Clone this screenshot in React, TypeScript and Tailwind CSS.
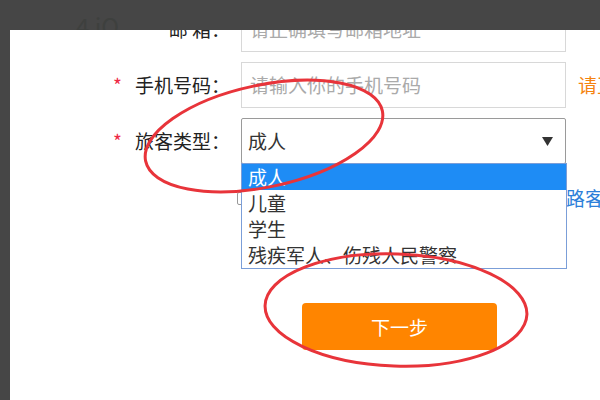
import React from 'react';

const font = "font-['Noto_Sans_CJK_SC','Microsoft_YaHei',sans-serif]";

const options = ['成人', '儿童', '学生', '残疾军人、伤残人民警察'];

function Label({ text, required }: { text: string; required?: boolean }) {
    return (
        <div className="w-[220px] shrink-0 flex items-center justify-end text-[19px] leading-[26px] text-[#222]">
            {required && <span className="text-[#ee2a45] mr-[13px] text-[19px]">*</span>}
            <span className="whitespace-pre">{text}</span>
        </div>
    );
}

export default function App() {
    return (
        <div className={`relative w-[600px] h-[400px] bg-[#464646] flex flex-col overflow-hidden ${font}`}>
            {/* top dark bar, faint watermark behind */}
            <div className="h-[30px] shrink-0 overflow-hidden pl-[76px] pt-[14px]">
                <span className="text-[24px] leading-none text-[#3e403e]">4 iQ</span>
            </div>

            <div className="flex flex-1">
                <div className="w-[10px] shrink-0" />
                <div className="flex-1 bg-white overflow-hidden">
                    <div className="-mt-[24px] flex flex-col gap-[10px]">
                        {/* email */}
                        <div className="flex items-center h-[46px]">
                            <Label text="邮 箱：" />
                            <div className="ml-[11px] w-[325px] h-[46px] border border-[#d8d8d8] flex items-center pl-[8px] text-[19px] text-[#aaa]">
                                请正确填写邮箱地址
                            </div>
                        </div>

                        {/* phone */}
                        <div className="flex items-center h-[46px]">
                            <Label text="手机号码：" required />
                            <div className="ml-[11px] w-[325px] h-[46px] shrink-0 border border-[#d8d8d8] flex items-center pl-[8px] text-[19px] text-[#aaa]">
                                请输入你的手机号码
                            </div>
                            <span className="ml-[12px] whitespace-nowrap text-[19px] text-[#f5830f]">请正确填写手机号码</span>
                        </div>

                        {/* passenger type */}
                        <div className="flex items-center h-[46px]">
                            <Label text="旅客类型：" required />
                            <div className="relative ml-[11px] w-[325px] h-[46px] shrink-0 border border-[#9a9a9a] rounded-[2px] flex items-center justify-between pl-[6px] pr-[12px] text-[19px] text-[#333]">
                                <span>成人</span>
                                <svg width="11" height="9" viewBox="0 0 11 9">
                                    <path d="M0 0 H11 L5.5 9 Z" fill="#333" />
                                </svg>
                                <ul className="absolute z-10 top-full -left-px w-[326px] bg-white border border-[#7b9ed8] text-[19px]">
                                    {options.map((o, i) => (
                                        <li
                                            key={o}
                                            className={`h-[26px] leading-[26px] pl-[6px] whitespace-nowrap ${i === 0 ? 'bg-[#1e8cf5] text-white' : 'text-[#333]'}`}
                                        >
                                            {o}
                                        </li>
                                    ))}
                                </ul>
                            </div>
                        </div>
                    </div>

                    {/* agreement, mostly covered by the open list */}
                    <div className="mt-[21px] h-[26px] flex items-center pl-[227px] whitespace-nowrap text-[19px] leading-[26px]">
                        <span className="w-[13px] h-[13px] shrink-0 border border-[#999] rounded-[2px] bg-white" />
                        <span className="ml-[12px] text-[#333]">本人已认真阅读并同意遵守</span>
                        <span className="text-[#2d7fd9]">《中国铁路客户服务中心网站服务条款》</span>
                    </div>

                    {/* next */}
                    <div className="mt-[92px] pl-[292px]">
                        <button className="w-[195px] h-[47px] rounded-[4px] bg-[#ff8500] text-white text-[19px] leading-none">
                            下一步
                        </button>
                    </div>
                </div>
            </div>

            {/* red hand-drawn marks */}
            <svg className="absolute inset-0 pointer-events-none z-20" width="600" height="400" viewBox="0 0 600 400">
                <ellipse cx="264" cy="136" rx="121" ry="51" transform="rotate(-12 264 136)" fill="none" stroke="#e8343a" strokeWidth="3" />
                <ellipse cx="396" cy="310" rx="131" ry="56" transform="rotate(2 396 310)" fill="none" stroke="#e8343a" strokeWidth="3" />
            </svg>
        </div>
    );
}
